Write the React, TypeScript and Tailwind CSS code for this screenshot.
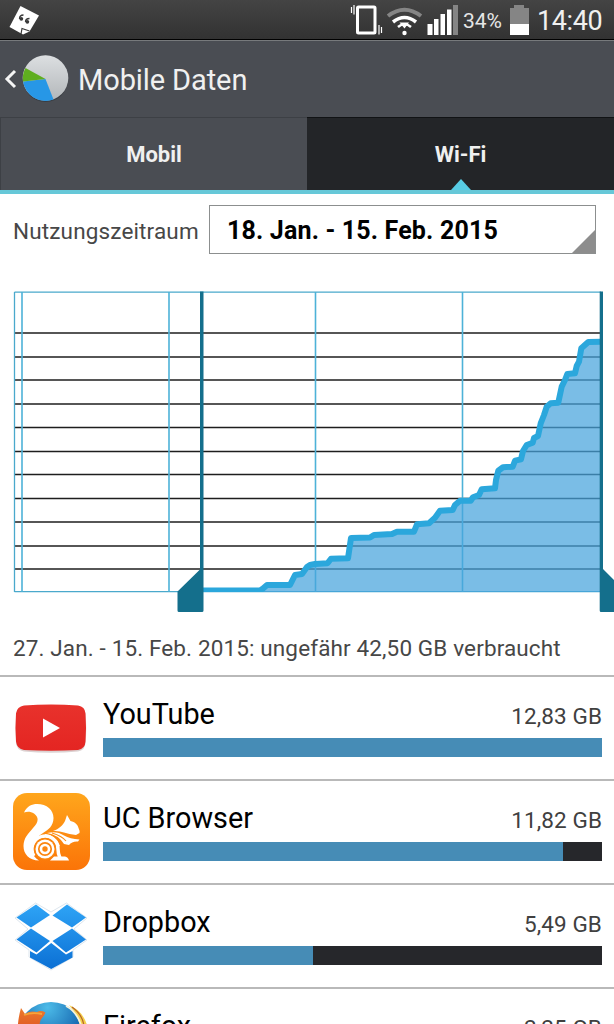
import type { ReactNode } from "react";

type AppUsage = {
    name: string;
    size: string;
    percent: number;
    icon: ReactNode;
};

const GRID_ROWS = [333, 357, 380, 404, 427.5, 451.5, 474.5, 498.5, 522, 546, 569];
const GRID_COLUMNS = [22, 169, 315.5, 462.5];

// Cumulated traffic between the two range handles
const USAGE_POINTS =
    "203,590.5 260,590.5 263,588.5 267,585 290,585 295,575 302,574 307,567 310,565 315,564 327.5,563.3 331,558.7 348,558.3 351,538 370,537.5 374,535 392,534 397,531.7 414,531.7 417,524.3 429,523.3 435,517.7 440,510.7 452.7,510 455,505 460,500.7 470.7,500.7 473,497.3 479,495 481.7,489.3 495,488.3 496,480 498.3,470.7 503,467.3 512.7,466.7 515,460.7 521,459.3 523,451 526.7,445 532.7,442.7 534,438 538,436 540.7,423.3 544,415 546.7,406.7 550.7,403.3 558.3,402.7 561.7,386.7 565,380 567.3,374 575,373.3 576.7,366 579,361.7 581.3,348.3 588.3,342 601,341.7";

function YouTubeIcon() {
    return (
        <svg className="shrink-0" width="78" height="78" viewBox="0 0 78 78">
            <defs>
                <linearGradient id="yt" x1="0" y1="0" x2="0" y2="1">
                    <stop offset="0" stopColor="#e8322c" />
                    <stop offset="1" stopColor="#e42522" />
                </linearGradient>
            </defs>
            <path
                d="M12 18Q39 15 66 18Q73 19 73.5 25.5Q75 40.5 73.5 54Q73 61.5 66 62.5Q39 65 12 62.5Q5 61.5 4 54Q3 40.5 4 25.5Q5 19 12 18Z"
                fill="#dcd2d2"
            />
            <path
                d="M12 16.5Q39 14.5 66 16.5Q73 17.5 73.5 24.5Q74.5 38.5 73.5 52.5Q73 60 66 61Q39 62.5 12 61Q5 60 4 52.5Q3 38.5 4 24.5Q5 17.5 12 16.5Z"
                fill="url(#yt)"
            />
            <path d="M31 29.5L48 39L31 48.5Z" fill="#fff" />
        </svg>
    );
}

function UcIcon() {
    return (
        <svg className="shrink-0" width="78" height="78" viewBox="0 0 78 78">
            <defs>
                <linearGradient id="uc" x1="0" y1="0" x2="0" y2="1">
                    <stop offset="0" stopColor="#ffa61c" />
                    <stop offset="1" stopColor="#fb7408" />
                </linearGradient>
            </defs>
            <rect x="1" y="0" width="77" height="77" rx="14" fill="url(#uc)" />
            {/* tail */}
            <path
                d="M12 19.5C15 13 20 11 25 11C35 11 41.5 17 41.5 25C41.5 33 36 37 31 40C24 44 19.5 51 20 58C20.5 62 23 65 27 67.5C17 67.5 11.5 61 11.5 53C11.5 45 16 41 21 35C27 29 27 24 22 20.5C19 18.5 15 18.5 12 19.5Z"
                fill="#fff"
            />
            {/* body */}
            <path d="M22 63A13 13 0 1 1 46 56Q46 61 48 65" fill="none" stroke="#fff" strokeWidth="3.5" />
            <path d="M42 63.5H53Q56 64 57 67.5H38Z" fill="#fff" />
            <circle cx="33" cy="56" r="11" fill="#fb8610" />
            <circle cx="33" cy="56" r="9.5" fill="#fff" />
            <circle cx="33" cy="56" r="6.2" fill="none" stroke="#fb8610" strokeWidth="1.7" />
            <circle cx="33" cy="56" r="2.7" fill="#fb8610" />
            {/* head */}
            <path
                d="M41 38C47 36 51 32 53 28L55 22L58.5 28C63 29 66 32 66.5 35Q68 38 67.5 40L64 42Q57 41 52 39.5Q47 37.5 41 38Z"
                fill="#fff"
            />
            {/* arms */}
            <path d="M35 40Q45 37.5 52 42.5Q58 46 67.5 46.5L66 48.5Q60 48 57 52L52 51Q46 41.5 35 40Z" fill="#fff" />
            <path d="M33 42Q43 43 47 53" fill="none" stroke="#fff" strokeWidth="2" />
            <path d="M40 40Q50 43 54 48" fill="none" stroke="#fb8c12" strokeWidth="1.2" />
        </svg>
    );
}

function DropboxIcon() {
    return (
        <svg className="shrink-0" width="78" height="78" viewBox="0 1 78 78">
            <defs>
                <linearGradient id="dbx" gradientUnits="userSpaceOnUse" x1="0" y1="8" x2="0" y2="74">
                    <stop offset="0" stopColor="#2ea4f6" />
                    <stop offset="1" stopColor="#0b6fd4" />
                </linearGradient>
            </defs>
            <path
                d="M23.5 7L39 16L54.5 7L75 22L62 33L75 44L61 54V61L39 74L17 61V54L3 44L16 33L3 22Z"
                fill="#fff"
                stroke="#dde6ee"
                strokeWidth="1"
            />
            <g fill="url(#dbx)">
                <path d="M24 8.5L38 19L19 31.5L4.5 21.5Z" />
                <path d="M55 8.5L74 21.5L60 31.5L40.5 19.5Z" />
                <path d="M19 32.5L38 45L24.5 56.5L4.5 43.5Z" />
                <path d="M60 32.5L74 43.5L54 56.5L40.5 45Z" />
                <path d="M39.2 47L54 58.5L60.5 55V61.5L39.2 73L18 61.5V55L24.5 58.5Z" />
            </g>
        </svg>
    );
}

function FirefoxIcon() {
    return (
        <svg className="shrink-0" width="78" height="78" viewBox="0 0 78 78">
            <defs>
                <radialGradient id="globe" cx="0.45" cy="0.08" r="0.5">
                    <stop offset="0" stopColor="#4cbbe8" />
                    <stop offset="1" stopColor="#1a6db4" />
                </radialGradient>
                <linearGradient id="fox" x1="0" y1="0" x2="0" y2="1">
                    <stop offset="0" stopColor="#ec7a2c" />
                    <stop offset="1" stopColor="#d9481e" />
                </linearGradient>
            </defs>
            <circle cx="39" cy="35" r="34" fill="url(#globe)" />
            <path d="M57 4C66 8 72 14 75 24L76 40H68C70 24 66 14 57 4Z" fill="#f5d04a" />
            <path d="M54 5C62 9 66 15 69 24" fill="none" stroke="#f7f3dc" strokeWidth="1.8" />
            <path d="M60 6C67 11 71 17 72 25" fill="none" stroke="#b5652a" strokeWidth="1.2" />
            <path
                d="M9 7L13 13C17 10 21 10 25 11Q29 9 33.5 11.5Q32 15 30 17Q27 20 28 24L30 40H6C5 28 6 17 9 7Z"
                fill="url(#fox)"
            />
            <path d="M12 14Q20 11 30 13" fill="none" stroke="#f6a53a" strokeWidth="1.8" />
        </svg>
    );
}

const APPS: AppUsage[] = [
    { name: "YouTube", size: "12,83 GB", percent: 100, icon: <YouTubeIcon /> },
    { name: "UC Browser", size: "11,82 GB", percent: 92.1, icon: <UcIcon /> },
    { name: "Dropbox", size: "5,49 GB", percent: 42.1, icon: <DropboxIcon /> },
    { name: "Firefox", size: "2,25 GB", percent: 18, icon: <FirefoxIcon /> },
];

function StatusBar() {
    return (
        <div className="flex h-10 shrink-0 items-center border-b border-black bg-gradient-to-b from-[#444444] to-[#323232]">
            <svg className="ml-2 shrink-0" width="34" height="39" viewBox="8 0 34 39">
                <path d="M20.5 6L39 15.5L29.5 31.5L23 34.5L9.5 27Z" fill="#fff" />
                <path d="M21 34L22 28.5L29.5 31" fill="none" stroke="#3a3a3a" strokeWidth="1.2" />
                <path
                    d="M23.5 15Q19.5 15 19.5 19M29.5 18.5Q25.5 18.5 25.5 22"
                    fill="none"
                    stroke="#3a3a3a"
                    strokeWidth="1.3"
                />
                <circle cx="21.3" cy="18.8" r="1.9" fill="#3a3a3a" />
                <circle cx="27.3" cy="21.8" r="1.9" fill="#3a3a3a" />
            </svg>
            <svg className="ml-[306px] shrink-0" width="112" height="39" viewBox="348 0 112 39">
                {/* vibrate */}
                <rect x="357.5" y="7" width="17.5" height="26" rx="1" fill="none" stroke="#fff" strokeWidth="3" />
                <path d="M351.5 7V13M354 5V14.5M379 25V34.5M381.5 27V33" stroke="#fff" strokeWidth="1.2" />
                {/* wifi */}
                <path d="M388 16Q404.5 3.5 421 16" fill="none" stroke="#858585" strokeWidth="4" />
                <path d="M393 22Q404.5 13 416 22" fill="none" stroke="#fff" strokeWidth="3.5" />
                <path d="M398 27Q404.5 21.5 411 27" fill="none" stroke="#fff" strokeWidth="2.5" />
                <path d="M399.5 22.5H409L404.5 28.5Z" fill="#fff" />
                <circle cx="404.5" cy="33" r="2.2" fill="#fff" />
                {/* signal */}
                <path d="M427.5 24h5v11h-5zM434 19h4.5v16h-4.5zM440.5 14h4.5v21h-4.5zM447 9.5h4.5v25.5h-4.5z" fill="#fff" />
                <path d="M453 5h5v30h-5z" fill="#858585" />
            </svg>
            <span className="ml-[3px] w-[42px] pt-[3px] text-[21px] leading-none whitespace-nowrap text-[#e6e6e6]">34%</span>
            <svg className="ml-1 shrink-0" width="20" height="39" viewBox="509 0 20 39">
                <path d="M514 5H524V8H529V24H510V8H514Z" fill="#858585" />
                <path d="M510 24H529V35H510Z" fill="#fff" />
            </svg>
            <span className="ml-2 pt-1 text-[27px] leading-none tracking-[-0.4px] whitespace-nowrap text-[#f0f0f0]">
                14:40
            </span>
        </div>
    );
}

function TitleBar() {
    return (
        <div className="flex h-[77px] shrink-0 items-center border-t border-[#777a7c] bg-[#4a4d53]">
            <svg className="shrink-0" width="72" height="76" viewBox="0 41 72 76">
                <defs>
                    <linearGradient id="pie" x1="0" y1="0" x2="0" y2="1">
                        <stop offset="0" stopColor="#dcdfe1" />
                        <stop offset="1" stopColor="#b3b7ba" />
                    </linearGradient>
                </defs>
                <path d="M15 71L7 79L15 87" fill="none" stroke="#f5f5f5" strokeWidth="3" />
                <circle cx="45.5" cy="79.5" r="22.5" fill="#3a3d42" />
                <circle cx="45.5" cy="78" r="22.8" fill="url(#pie)" />
                <path d="M45.5 79L53.5 99.5A22.8 22.8 0 0 1 23 81.5Z" fill="#2797e6" />
                <path d="M45.5 79L23 81.5A22.8 22.8 0 0 1 25.5 68Z" fill="#5fae1f" />
            </svg>
            <h1 className="ml-[6px] pt-[3px] text-[29px] leading-none tracking-[-0.1px] whitespace-nowrap text-[#f0f0f0]">
                Mobile Daten
            </h1>
        </div>
    );
}

function Tabs() {
    return (
        <div className="flex h-[77px] shrink-0 border-b-4 border-[#66c8d8] text-[22px] font-bold text-[#f0f0f0]">
            <div className="flex w-[307px] items-center justify-center border-t border-l border-[#3d4045] bg-[#4a4d53]">
                <span>Mobil</span>
            </div>
            <div className="relative flex w-[307px] items-center justify-center border-t border-[#111315] bg-[#232528]">
                <span>Wi-Fi</span>
                <svg className="absolute bottom-0 left-[144px]" width="20" height="11" viewBox="0 0 20 11">
                    <path d="M10 0L20 11H0Z" fill="#57cce4" />
                </svg>
            </div>
        </div>
    );
}

function PeriodPicker() {
    return (
        <div className="flex h-[86px] shrink-0 items-start pt-[11px] pl-[13px]">
            <span className="flex h-[53px] w-[196px] shrink-0 items-center text-[22.5px] tracking-[0.15px] whitespace-nowrap text-[#474747]">
                Nutzungszeitraum
            </span>
            <div className="relative flex h-[49px] w-[387px] items-center border border-[#8c8f8f] pl-[17px] text-[25px] font-bold text-black">
                <span className="pt-[2px] tracking-[0.16px] whitespace-nowrap">18. Jan. - 15. Feb. 2015</span>
                <svg className="absolute right-0 bottom-0" width="23" height="23" viewBox="0 0 23 23">
                    <path d="M23 0V23H0Z" fill="#8d8d8d" />
                </svg>
            </div>
        </div>
    );
}

function UsageChart() {
    return (
        <svg className="block shrink-0" width="614" height="340" viewBox="0 280 614 340">
            {GRID_ROWS.map((y) => (
                <path key={y} d={`M14 ${y}H600`} stroke="#1e1e1e" strokeWidth="1.7" />
            ))}
            <path d="M14.5 292.2H601M14.5 591.7H601M14.5 292V592" stroke="#4aa9cc" strokeWidth="1.3" />
            {GRID_COLUMNS.map((x) => (
                <path key={x} d={`M${x} 292V592`} stroke="#4db2d8" strokeWidth="1.6" />
            ))}
            <polygon points={`${USAGE_POINTS} 601,592 203,592`} fill="#47a4dd" fillOpacity="0.72" />
            <clipPath id="plot">
                <rect x="200" y="290" width="403" height="302" />
            </clipPath>
            <polyline
                points={USAGE_POINTS}
                fill="none"
                stroke="#2ba7dc"
                strokeWidth="6"
                strokeLinejoin="round"
                clipPath="url(#plot)"
            />
            {/* range handles */}
            <path
                d="M200 291.5H203.5V610.5Q203.5 612 202 612H179Q177.5 612 177.5 610.5V591.5L200 569.5Z"
                fill="#146f8c"
            />
            <path d="M599.7 291.5H603V569L614 580V612H601Q599.7 612 599.7 610.5Z" fill="#146f8c" />
        </svg>
    );
}

function UsageRow({ app }: { app: AppUsage }) {
    return (
        <div className="flex h-[104px] shrink-0 border-t-2 border-[#b9b9b9] pt-[12px] pl-3">
            {app.icon}
            <div className="ml-[13px] w-[499px]">
                <div className="flex h-[49px] items-baseline justify-between pt-[5px] whitespace-nowrap">
                    <span className="text-[28.8px] leading-[40px] text-black">{app.name}</span>
                    <span className="text-[22.5px] tracking-[0.1px] text-[#404040]">{app.size}</span>
                </div>
                <div className="h-[19px] bg-[#26272b]">
                    <div className="h-full bg-[#468cb6]" style={{ width: `${app.percent}%` }} />
                </div>
            </div>
        </div>
    );
}

export default function App() {
    return (
        <div className="flex h-[1024px] w-[614px] flex-col overflow-hidden bg-white font-[Roboto,sans-serif]">
            <StatusBar />
            <TitleBar />
            <Tabs />
            <PeriodPicker />
            <UsageChart />
            <p className="h-[55px] shrink-0 pt-[12px] pl-[13px] text-[22.5px] tracking-[0.13px] whitespace-nowrap text-[#474747]">
                27. Jan. - 15. Feb. 2015: ungefähr 42,50 GB verbraucht
            </p>
            {APPS.map((app) => (
                <UsageRow key={app.name} app={app} />
            ))}
        </div>
    );
}
